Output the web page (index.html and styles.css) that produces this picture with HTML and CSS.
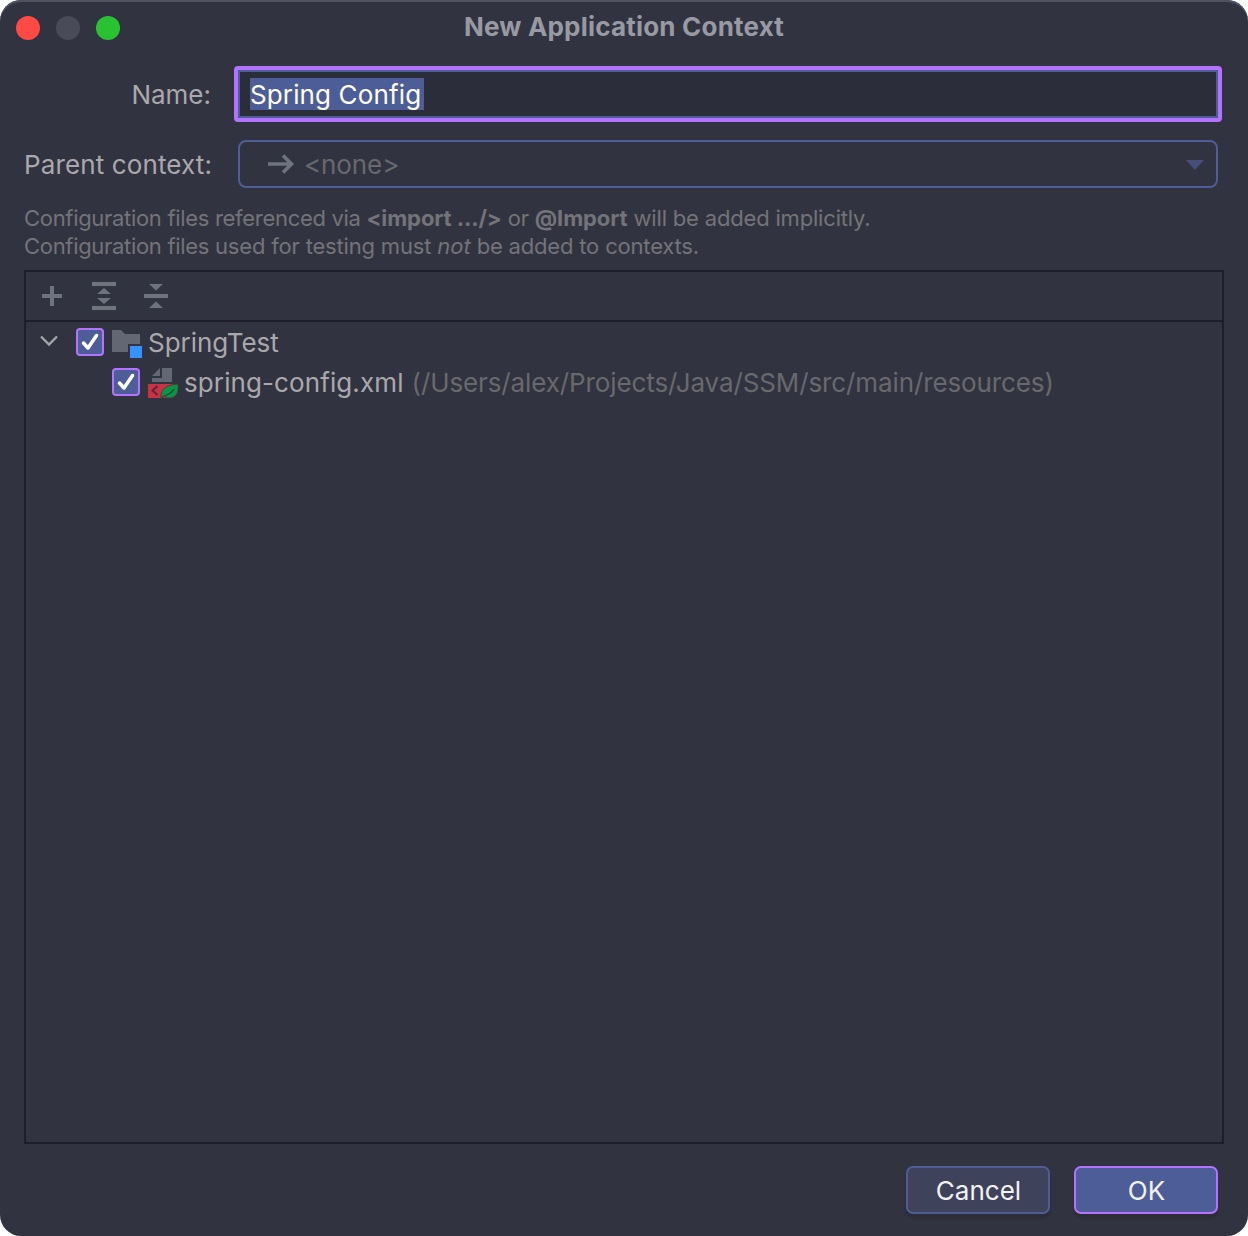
FILE: index.html
```html
<!DOCTYPE html>
<html lang="en">
<head>
<meta charset="utf-8">
<title>New Application Context</title>
<link rel="stylesheet" href="styles.css">
</head>
<body>
<main class="dialog">
  <header class="titlebar">
    <div class="lights"><i class="light red"></i><i class="light gray"></i><i class="light green"></i></div>
    <h1 class="title">New Application Context</h1>
  </header>
  <section class="form">
    <div class="field">
      <span class="label t-name">Name:</span>
      <div class="input"><span class="selection">Spring Config</span></div>
    </div>
    <div class="field">
      <span class="label t-parent">Parent context:</span>
      <div class="combo">
        <svg class="arrow" width="28" height="22" viewBox="0 0 28 22"><path d="M0 11H24M15 2.500L23.500 11L15 19.500" fill="none" stroke="#6f737e" stroke-width="3.600"/></svg>
        <span class="none">&lt;none&gt;</span>
        <svg class="caret" width="18" height="10" viewBox="0 0 18 10"><path d="M0 0H18L9 10Z" fill="#454f78"/></svg>
      </div>
    </div>
  </section>
  <div class="hint">
    <div><span class="lead">Configuration files referenced via </span><b>&lt;import .../&gt;</b> or <b>@Import</b> will be added implicitly.</div>
    <div><span class="lead">Configuration files </span>used for testing must <em>not</em> be added to contexts.</div>
  </div>
  <section class="panel">
    <div class="toolbar">
      <svg width="28" height="28" viewBox="0 0 28 28"><path d="M4 14H24M14 4V24" stroke="#6f737e" stroke-width="4"/></svg>
      <svg width="28" height="28" viewBox="0 0 28 28"><path d="M2 0H26V4H2ZM2 24H26V28H2ZM14 6L21 12H7ZM7 16H21L14 22Z" fill="#6f737e"/></svg>
      <svg width="28" height="28" viewBox="0 0 28 28"><path d="M2 12H26V16H2ZM7 2H21L14 8.500ZM14 19.500L21 26H7Z" fill="#6f737e"/></svg>
    </div>
    <div class="row root">
      <svg class="chevron" width="18" height="14" viewBox="0 0 18 14"><path d="M1 1.500L9 9.500L17 1.500" fill="none" stroke="#a5a6aa" stroke-width="2.300"/></svg>
      <span class="check"><svg width="24" height="24" viewBox="0 0 24 24"><path d="M5.500 13L10 18L18.500 5.500" fill="none" stroke="#fff" stroke-width="3.500" stroke-linecap="round" stroke-linejoin="round"/></svg></span>
      <svg class="icon" width="32" height="32" viewBox="0 0 32 32"><path d="M2 4H11L15 8H30V18H18V26H2Z" fill="#626773"/><path d="M20 20H32V32H20Z" fill="#3592ff"/></svg>
      <span class="t-root">SpringTest</span>
    </div>
    <div class="row child">
      <span class="check"><svg width="24" height="24" viewBox="0 0 24 24"><path d="M5.500 13L10 18L18.500 5.500" fill="none" stroke="#fff" stroke-width="3.500" stroke-linecap="round" stroke-linejoin="round"/></svg></span>
      <svg class="icon" width="32" height="32" viewBox="0 0 32 32"><path d="M14 2V10H6ZM16 2H26V16H6V12H16Z" fill="#626773"/><path d="M2 18H27V32H2Z" fill="#ca3145"/><path d="M11.500 20L6.500 24.500L11.500 29" fill="none" stroke="#522b38" stroke-width="2"/><path d="M15 32C14 24 19 19 32 18C33 27 30 32 23 32C20 32 19 31 18 30L15.500 32Z" fill="#079547" stroke="#613441" stroke-width="1"/><path d="M16 31C22 29 26 27 28 23" fill="none" stroke="#204b39" stroke-width="1.500"/></svg>
      <span class="t-file">spring-config.xml</span><span class="t-path">(/Users/alex/Projects/Java/SSM/src/main/resources)</span>
    </div>
  </section>
  <footer class="footer">
    <button class="button cancel">Cancel</button>
    <button class="button ok">OK</button>
  </footer>
</main>
</body>
</html>
```

FILE: styles.css
```css
* { box-sizing: border-box; }
html { background: #fff; }
body { margin: 0; font-family: Inter, "Liberation Sans", sans-serif; font-size: 26px; color: #a9a9ac; }
svg { display: block; flex: none; }
span, .title { white-space: nowrap; }
.dialog { width: 1248px; height: 1236px; display: flex; flex-direction: column; background: #323340; border-radius: 21px; box-shadow: inset 0 2px #50525e; }
.titlebar { height: 56px; display: grid; grid-template-columns: 104px 1fr 104px; padding: 0 16px; align-items: center; }
.lights { display: flex; gap: 16px; }
.light { width: 24px; height: 24px; border-radius: 50%; }
.red { background: #ff4945; }
.gray { background: #494b58; }
.green { background: #2ac231; }
.title { margin: 0; text-align: center; font-size: 26px; line-height: 54px; height: 56px; font-weight: 700; color: #989aa3; letter-spacing: 0.200px; }
.form { display: grid; row-gap: 18px; padding: 10px 26px 0 24px; }
.field { display: grid; grid-template-columns: 210px 1fr; align-items: center; }
.label { width: 188px; text-align: right; }
.t-name { width: 187px; }
.t-parent { letter-spacing: 0.120px; }
.input { height: 56px; border: 4px solid #b473ff; border-radius: 4px; background: #2b2d3b; box-shadow: inset 0 0 0 2px #4d5d98; padding: 8px 12px; display: flex; }
.selection { height: 32px; width: 174px; line-height: 33px; background: #4d5d98; color: #fff; letter-spacing: 0.130px; }
.combo { height: 48px; margin: 0 4px; border: 2px solid #4d5d98; border-radius: 8px; display: flex; align-items: center; padding: 0 12px 0 28px; }
.none { margin-left: 8px; line-height: 32px; padding-top: 1px; color: #68696d; letter-spacing: -0.100px; }
.caret { margin: 2px 0 0 auto; }
.hint { margin: 16px 24px 0; font-size: 22px; line-height: 28px; color: #737479; white-space: nowrap; letter-spacing: -0.180px; }
.hint .lead { letter-spacing: -0.310px; white-space: inherit; }
.hint b { font-weight: 700; letter-spacing: -0.100px; }
.hint em { letter-spacing: 0; }
.panel { margin: 10px 24px 0; height: 874px; border: 2px solid #1d1e2a; }
.toolbar { height: 50px; border-bottom: 2px solid #1d1e2a; display: flex; align-items: center; gap: 24px; padding-left: 12px; }
.row { height: 40px; display: flex; align-items: center; }
.root { padding-left: 14px; }
.child { padding-left: 86px; }
.check { width: 28px; height: 28px; border: 2px solid #b473ff; border-radius: 4px; background: #4d5d98; }
.root .check { margin-left: 18px; }
.icon { margin: 0 6px; }
.t-root { letter-spacing: -0.050px; }
.t-file { letter-spacing: 0.100px; }
.t-path { margin-left: 8px; color: #68696d; letter-spacing: -0.110px; }
.footer { display: flex; justify-content: flex-end; gap: 24px; padding: 22px 30px 0; }
.button { width: 144px; height: 48px; padding: 2px 0 0 1px; border: 2px solid #4d5d98; border-radius: 7px; background: #3e435b; color: #f2f2f4; font: inherit; line-height: 42px; box-shadow: 0 4px 2px #2c2d36; }
.ok { background: #4d5d98; border-color: #b473ff; }
```
